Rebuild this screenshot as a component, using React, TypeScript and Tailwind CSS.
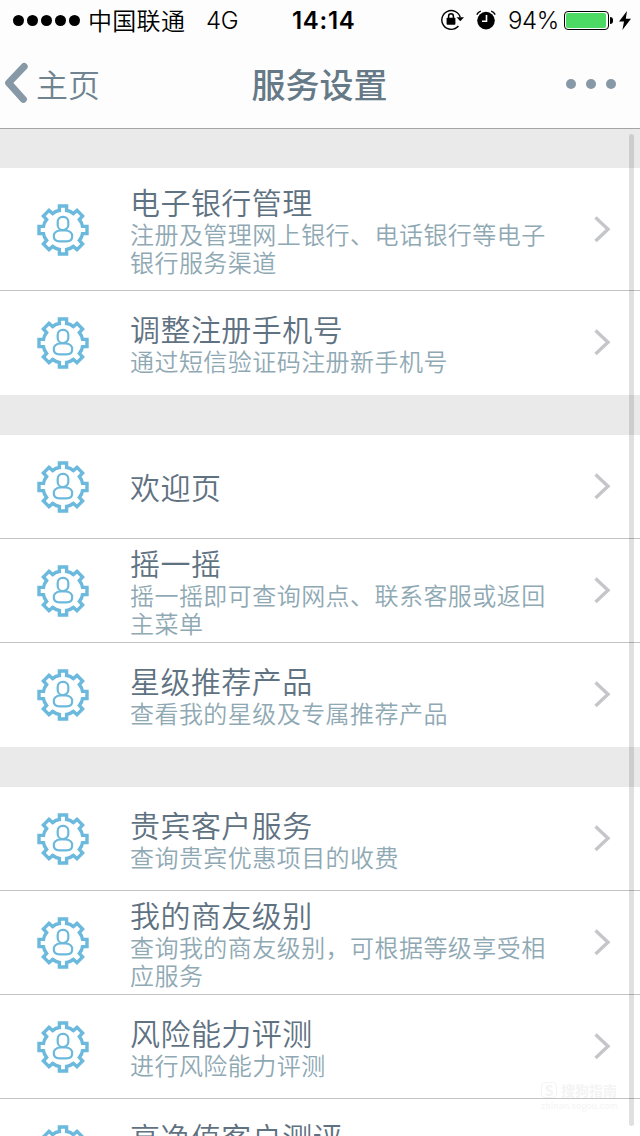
type RowProps = {
  title: string;
  desc?: string;
  height?: string;
};

const groups: RowProps[][] = [
  [
    {
      title: '电子银行管理',
      desc: '注册及管理网上银行、电话银行等电子银行服务渠道',
      height: 'h-[123px] pt-px',
    },
    { title: '调整注册手机号', desc: '通过短信验证码注册新手机号' },
  ],
  [
    { title: '欢迎页' },
    { title: '摇一摇', desc: '摇一摇即可查询网点、联系客服或返回主菜单' },
    { title: '星级推荐产品', desc: '查看我的星级及专属推荐产品' },
  ],
  [
    { title: '贵宾客户服务', desc: '查询贵宾优惠项目的收费' },
    { title: '我的商友级别', desc: '查询我的商友级别，可根据等级享受相应服务' },
    { title: '风险能力评测', desc: '进行风险能力评测' },
    { title: '高净值客户测评', desc: '进行高净值客户测评' },
  ],
];

const GearIcon = () => (
  <svg className="w-[54px] h-[54px] shrink-0" viewBox="-27 -27 54 54" fill="none" stroke="#6bb9dd">
    <path
      strokeWidth="3.4"
      d="M-3.6-19.5V-24H3.6V-19.5C5.5-19.3 8.5-18 10.4-16.4L14-19.6L19.6-14L16.4-10.4C18-8.5 19.3-5.5 19.5-3.6H24V3.6H19.5C19.3 5.5 18 8.5 16.4 10.4L19.6 14L14 19.6L10.4 16.4C8.5 18 5.5 19.3 3.6 19.5V24H-3.6V19.5C-5.5 19.3-8.5 18-10.4 16.4L-14 19.6L-19.6 14L-16.4 10.4C-18 8.5-19.3 5.5-19.5 3.6H-24V-3.6H-19.5C-19.3-5.5-18-8.5-16.4-10.4L-19.6-14L-14-19.6L-10.4-16.4C-8.5-18-5.5-19.3-3.6-19.5Z"
    />
    <rect x="-5.3" y="-13.2" width="10.6" height="13.2" rx="5" strokeWidth="2.2" />
    <path
      strokeWidth="2.2"
      d="M-3.2 0.5C-7 1-9.2 3.2-9.2 6.2C-9.2 9.6-7.4 11.3-3.6 11.3H3.6C7.4 11.3 9.2 9.6 9.2 6.2C9.2 3.2 7 1 3.2 0.5Z"
    />
  </svg>
);

const Row = ({ title, desc, height = 'h-[104px]' }: RowProps) => (
  <li
    className={`${height} shrink-0 flex items-center pl-9 pr-[29px] border-b border-[#c3c3c5] last:border-b-0`}
  >
    <GearIcon />
    <div className="ml-[40px] w-[424px] font-[350]">
      <p className="mb-px text-[30px] leading-[35px] tracking-[0.45px] text-[#5f7282]">{title}</p>
      {desc && (
        <p className="text-[24px] leading-7 tracking-[0.45px] text-[#8fa9b4]">{desc}</p>
      )}
    </div>
    <svg
      className="ml-auto mb-0.5 w-[18px] h-7"
      viewBox="0 0 18 28"
      fill="none"
      stroke="#c5c6c9"
      strokeWidth="3.4"
    >
      <path d="M2.5 2.5L15 14.3L2.5 26" />
    </svg>
  </li>
);

const StatusBar = () => (
  <div className="h-10 flex items-center text-black text-[24px] leading-none">
    <div className="ml-[13px] flex gap-[3px]">
      {[0, 1, 2, 3, 4].map((i) => (
        <span key={i} className="w-[11px] h-[11px] rounded-full bg-black" />
      ))}
    </div>
    <span className="ml-2 -mt-px tracking-[0.3px] font-[350] w-[98px]">中国联通</span>
    <span className="ml-5 mt-0.5 w-9 font-['Inter'] font-[350] tracking-[-0.4px]">4G</span>
    <span className="ml-[50px] mt-0.5 w-16 font-['Inter'] font-semibold whitespace-nowrap tracking-[0.7px]">
      14:14
    </span>
    <svg className="ml-[84px] w-6 h-6 shrink-0" viewBox="0 0 24 24" fill="none" stroke="#000">
      <path strokeWidth="1.4" d="M20.3 9.5A9.4 9.4 0 1 0 18.4 18" />
      <path fill="#000" stroke="none" d="M16.6 9.3H24L20.3 13.2Z" />
      <rect x="6.6" y="9.8" width="8.8" height="7" rx="0.8" fill="#000" stroke="none" />
      <path strokeWidth="1.5" d="M8.6 11V8.2A2.4 2.4 0 0 1 13.4 8.2V11" />
    </svg>
    <svg className="ml-3 w-5 h-5 shrink-0" viewBox="0 0 20 20" fill="none">
      <circle cx="10" cy="10.6" r="8.8" fill="#000" />
      <path stroke="#000" strokeWidth="1.4" d="M0.8 4.6Q2 2 4.8 1.1M19.2 4.6Q18 2 15.2 1.1" />
      <path stroke="#fff" strokeWidth="1.6" d="M10.5 5V11.2H6" />
    </svg>
    <span className="ml-3 mt-0.5 w-[50px] font-['Inter'] font-[350] whitespace-nowrap tracking-[-0.4px]">
      94%
    </span>
    <div className="ml-1.5 w-[45px] h-[19px] shrink-0 rounded-[4px] border border-black p-px">
      <div className="w-10 h-full rounded-[2px] bg-[#4cd964]" />
    </div>
    <span className="ml-px w-[3px] h-[7px] rounded-r-full bg-black" />
    <svg className="ml-[6px] w-3 h-[19px] shrink-0" viewBox="0 0 12 19">
      <path d="M8 0L0 10.6H5L3.4 19L12 7.8H6.8Z" />
    </svg>
  </div>
);

const NavBar = () => (
  <div className="h-[88px] flex items-center">
    <div className="w-[200px] flex items-center">
      <svg className="ml-1 w-[26px] h-11" viewBox="0 0 26 44" fill="none" stroke="#8798a6">
        <path
          strokeWidth="7"
          strokeLinecap="round"
          strokeLinejoin="round"
          d="M20.2 4.5L4.6 20.8L19.4 37.3"
        />
      </svg>
      <span className="ml-1.5 -mt-[3px] text-[32px] leading-10 font-[350] text-[#708391]">
        主页
      </span>
    </div>
    <h1 className="-mt-px w-[239px] text-center text-[34px] leading-10 font-medium text-[#657987]">
      服务设置
    </h1>
    <div className="ml-auto mr-6 flex gap-[10px]">
      <span className="w-[10px] h-[10px] rounded-full bg-[#8798a6]" />
      <span className="w-[10px] h-[10px] rounded-full bg-[#8798a6]" />
      <span className="w-[10px] h-[10px] rounded-full bg-[#8798a6]" />
    </div>
  </div>
);

const Watermark = () => (
  <div className="absolute left-[541px] top-[1080px] text-[#f4f4f4]">
    <div className="flex items-center gap-1 text-[14px] leading-5 font-bold">
      <span className="w-4 h-4 rounded-[4px] border border-[#f4f4f4] text-center text-[14px] leading-[14px]">
        S
      </span>
      搜狗指南
    </div>
    <p className="text-[9px] leading-3">zhinan.sogou.com</p>
  </div>
);

const App = () => {
  return (
    <div
      lang="zh-CN"
      className="relative w-[640px] h-[1136px] overflow-hidden flex flex-col bg-white font-['Noto_Sans_CJK_SC',sans-serif]"
    >
      <header className="shrink-0 h-[129px] bg-[#fdfdfd] border-b border-[#a5a5a7]">
        <StatusBar />
        <NavBar />
      </header>
      <main>
        {groups.map((rows, i) => (
          <section key={i} className="border-t-[40px] first:border-t-[39px] border-[#eaeaea]">
            <ul>
              {rows.map((row) => (
                <Row key={row.title} {...row} />
              ))}
            </ul>
          </section>
        ))}
      </main>
      <Watermark />
      <div className="absolute left-[629px] top-[134px] w-[5px] h-[992px] rounded-full bg-black/12" />
    </div>
  );
};

export default App;
